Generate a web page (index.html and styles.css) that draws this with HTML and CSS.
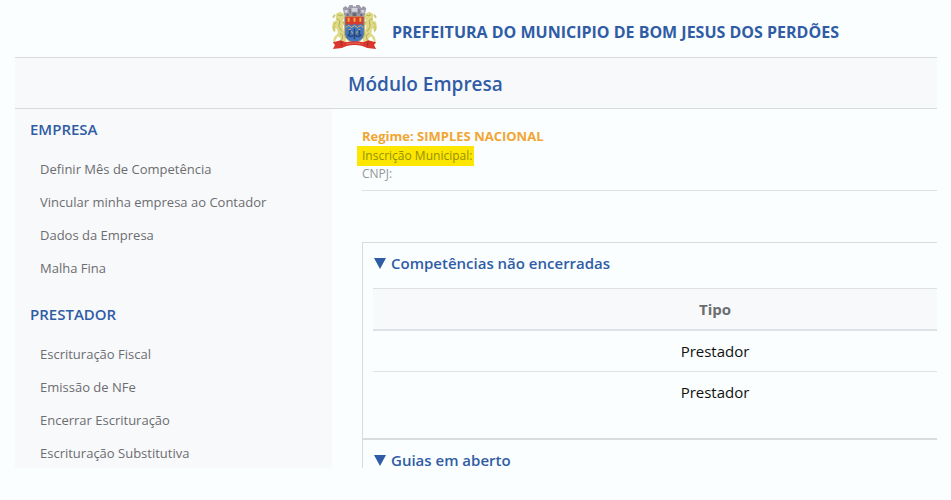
FILE: index.html
```html
<!DOCTYPE html>
<html lang="pt-BR">
  <head>
    <meta charset="UTF-8" />
    <meta name="viewport" content="width=device-width, initial-scale=1.0" />
    <title>Módulo Empresa</title>
    <link rel="stylesheet" href="styles.css">
  </head>
  <body>
    <header class="header">
      <svg class="brasao" viewBox="0 0 46 46" aria-hidden="true">
        <!-- coroa -->
        <path d="M11 3l3-2 2 2 2-3 3 0 1 2 1-1 1 1 1-2 3 0 2 3 2-2 3 2-2 10H13z" fill="#9d9ba9" />
        <path d="M13 5h3v3h-3zM20 3h6v4h-6zM30 5h3v3h-3z" fill="#d5d4dc" />
        <path d="M15 9h2v3h-2zM21 8h4v4h-4zM29 9h2v3h-2zM18 4h1v5h-1zM27 4h1v5h-1z" fill="#686775" />
        <!-- leões -->
        <g id="leao">
          <path d="M4 9l4-2 4 2 1 4-2 3 4 1 0 3-4 1 1 5 3 4-1 4 1 5H7l2-5-3-2-3 5 1 2H1l1-6 4-4-1-5-2 1-3-2 1-6 3-1z" fill="#dfda86" />
          <path d="M6 10l3 1 2-1M5 14l3 2-1 6 3 5M4 18l-2 2M11 18l3 1M8 29l3 2-1 5" fill="none" stroke="#b0ab54" />
          <path d="M3 27q-3-3 0-6M1 13l2-3" fill="none" stroke="#cdca70" stroke-width="2" />
        </g>
        <use href="#leao" transform="matrix(-1 0 0 1 46 0)" />
        <!-- escudo -->
        <path d="M13 12h20v18q0 6-10 9Q13 36 13 30z" fill="#4378bf" stroke="#c9a563" />
        <path d="M14 12h18v9l-3-2-3 2-3-2-3 2-3-2-3 2z" fill="#d93c2b" />
        <path d="M17 13v4M23 13v4M29 13v4" stroke="#f2b047" stroke-width="2" />
        <path d="M14 23l3-2 3 2 3-2 3 2 3-2 3 2" fill="none" stroke="#e2b65a" />
        <path d="M18 25v6M28 25v6M23 24v11M16 30q2 4 6 1M24 31q4 3 6-1" fill="none" stroke="#2c4577" stroke-width="1.500" />
        <path d="M20 27l1 2M26 27l-1 2M17 25h2M27 25h2" stroke="#d6b566" />
        <!-- faixa -->
        <path d="M1 38l8-2 5 2q9-2 18 0l5-2 8 2-2 3 2 4-9-1-5-2q-8-2-16 0l-5 2-9 1 2-4z" fill="#d9372e" />
        <path d="M9 37l1 5M37 37l-1 5" stroke="#a52a25" />
        <path d="M15 40q8-2 16 0" fill="none" stroke="#ee7b6f" stroke-dasharray="2 1" />
      </svg>
      <span class="prefeitura">PREFEITURA DO MUNICIPIO DE BOM JESUS DOS PERDÕES</span>
    </header>

    <div class="modulo">
      <h1>Módulo Empresa</h1>
    </div>

    <div class="container">
      <nav class="menu">
        <section class="menu-grupo">
          <h2>EMPRESA</h2>
          <ul>
            <li><a href="#">Definir Mês de Competência</a></li>
            <li><a href="#">Vincular minha empresa ao Contador</a></li>
            <li><a href="#">Dados da Empresa</a></li>
            <li><a href="#">Malha Fina</a></li>
          </ul>
        </section>
        <section class="menu-grupo">
          <h2>PRESTADOR</h2>
          <ul>
            <li><a href="#">Escrituração Fiscal</a></li>
            <li><a href="#">Emissão de NFe</a></li>
            <li><a href="#">Encerrar Escrituração</a></li>
            <li><a href="#">Escrituração Substitutiva</a></li>
          </ul>
        </section>
      </nav>

      <main class="conteudo">
        <div class="empresa">
          <p class="regime">Regime: SIMPLES NACIONAL</p>
          <p class="inscricao"><mark>Inscrição Municipal:</mark></p>
          <p class="cnpj">CNPJ:</p>
        </div>

        <details class="painel" open>
          <summary>
            <svg class="seta" viewBox="0 0 12 11" aria-hidden="true"><path d="M0 0h12L6 11z" /></svg>
            Competências não encerradas
          </summary>
          <table class="tabela">
            <thead>
              <tr><th>Tipo</th></tr>
            </thead>
            <tbody>
              <tr><td>Prestador</td></tr>
              <tr><td>Prestador</td></tr>
            </tbody>
          </table>
        </details>
        <details class="painel">
          <summary>
            <svg class="seta" viewBox="0 0 12 11" aria-hidden="true"><path d="M0 0h12L6 11z" /></svg>
            Guias em aberto
          </summary>
        </details>
      </main>
    </div>
  </body>
</html>
```

FILE: styles.css
```css
@charset 'utf-8';
* {
  margin: 0;
  padding: 0;
  box-sizing: border-box;
}

body {
  padding: 0 14px 0 15px;
  background: #fafefe;
  color: #111;
  font-family: "Segoe UI", "Open Sans", sans-serif;
  font-size: 15px;
}
ul {
  list-style: none;
}
a {
  color: inherit;
  text-decoration: none;
}

/* topo */
.header {
  display: flex;
  align-items: center;
  gap: 15px;
  padding: 5px 0 7px 317px;
}
.brasao {
  width: 45px;
  height: 45px;
}
.prefeitura {
  padding-top: 8px;
  color: #305ca6;
  font-size: 16px;
  font-weight: 700;
  line-height: 24px;
}
.modulo {
  padding: 11px 0 9px 333px;
  border-top: 1px solid #dadbde;
  border-bottom: 1px solid #dadbde;
  background: #f8f9fb;
}
.modulo h1 {
  color: #305ca6;
  font-size: 19px;
  font-weight: 600;
  line-height: 30px;
}

.container {
  display: flex;
}

/* menu lateral */
.menu {
  flex: 0 0 317px;
  padding: 8px 15px 4px;
  background: #f8f9fb;
}
.menu-grupo + .menu-grupo {
  margin-top: 23px;
}
.menu h2 {
  margin-bottom: 18px;
  color: #305ca6;
  font-size: 15px;
  font-weight: 600;
  line-height: 24px;
}
.menu ul {
  display: grid;
  gap: 12px;
  padding-left: 10px;
}
.menu li {
  color: #6c6d70;
  font-size: 13px;
  line-height: 21px;
}

/* conteúdo */
.conteudo {
  flex: 1;
  padding: 17px 0 0 30px;
}
.empresa {
  margin-bottom: 51px;
  padding-bottom: 8px;
  border-bottom: 1px solid #dedfe2;
  color: #949599;
  font-size: 12px;
  line-height: 16px;
}
.regime {
  color: #f2a532;
  font-size: 13px;
  font-weight: 700;
  line-height: 20px;
}
.inscricao {
  display: flex;
  margin-left: -5px;
}
.inscricao mark {
  padding: 0 2px 0 5px;
  background: #fde700;
  color: #949000;
  line-height: 20px;
}

.painel {
  padding-left: 10px;
  border-left: 1px solid #dadbde;
}
.painel[open] {
  padding-bottom: 26px;
  border-top: 1px solid #dadbde;
  border-bottom: 2px solid #dadbde;
}
.painel summary {
  display: flex;
  align-items: center;
  gap: 5px;
  padding: 12px 0 0 1px;
  color: #305ca6;
  font-size: 15px;
  font-weight: 600;
  line-height: 16px;
  cursor: pointer;
}
.seta {
  width: 12px;
  height: 11px;
  fill: #305ca6;
}

.tabela {
  width: 100%;
  margin-top: 17px;
  border-spacing: 0;
  text-align: center;
}
.tabela th,
.tabela td {
  padding: 8px 0 8px 120px;
  border-top: 1px solid #dce2e6;
  line-height: 24px;
}
.tabela th {
  border-bottom: 2px solid #dce2e6;
  background: #f8f9fb;
  color: #6c6d70;
}
.tabela tbody tr:first-child td {
  border-top: 0;
}
```
